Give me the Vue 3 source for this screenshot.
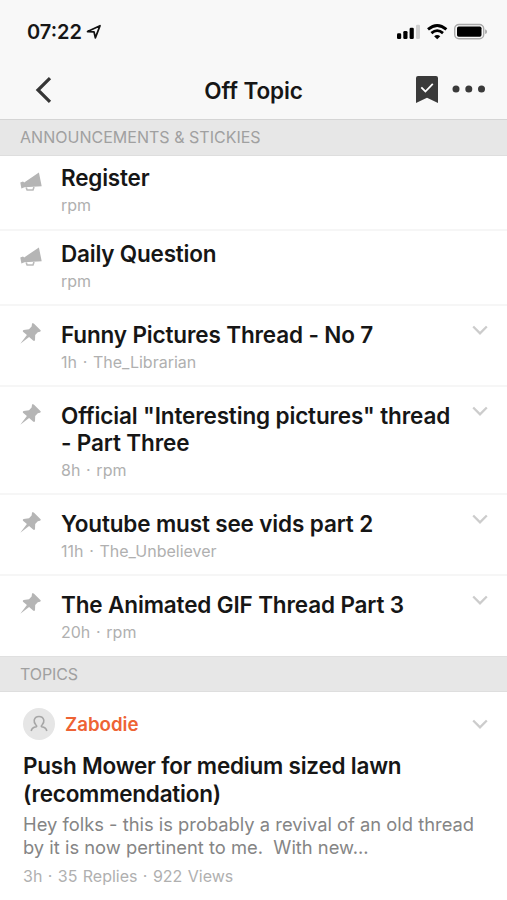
<script setup>
const threads = [
  { id: 1, kind: 'announcement', lines: ['Register'], meta: 'rpm' },
  { id: 2, kind: 'announcement', lines: ['Daily Question'], meta: 'rpm' },
  { id: 3, kind: 'pinned', lines: ['Funny Pictures Thread - No 7'], meta: '1h · The_Librarian' },
  { id: 4, kind: 'pinned', lines: ['Official "Interesting pictures" thread', '- Part Three'], meta: '8h · rpm' },
  { id: 5, kind: 'pinned', lines: ['Youtube must see vids part 2'], meta: '11h · The_Unbeliever' },
  { id: 6, kind: 'pinned', lines: ['The Animated GIF Thread Part 3'], meta: '20h · rpm' },
]
</script>

<template>
  <main class="screen">
    <header class="top">
      <div class="status">
        <span class="time">07:22</span>
        <svg class="location" width="16" height="16" viewBox="0 0 16 16"><path d="M1.6 7.5 14 1.8 9.4 13.8 8 7.9Z" fill="none" stroke="#111" stroke-width="1.8" stroke-linejoin="round" /></svg>
        <svg class="system" width="92" height="20" viewBox="0 0 92 20">
          <g fill="#000">
            <rect x="1" y="11.2" width="4.2" height="5.8" rx="1.3" />
            <rect x="7.3" y="9" width="4.2" height="8" rx="1.3" />
            <rect x="13.6" y="5.8" width="4.2" height="11.2" rx="1.3" />
            <rect x="20" y="2.7" width="4" height="14.3" rx="1.3" fill="#cfcfcf" />
            <path d="M38.1 14.2Q41.2 11.8 44.3 14.2L41.2 17.3Z" />
          </g>
          <path d="M32 7.4Q41.2-.5 50.4 7.4M35.4 11.1Q41.2 6.2 47 11.1" fill="none" stroke="#000" stroke-width="2.8" />
          <rect x="58.7" y="2.5" width="29" height="14.3" rx="4.3" fill="none" stroke="#a9a9a9" stroke-width="1.4" />
          <rect x="61" y="4.6" width="24.5" height="10.2" rx="1.7" fill="#000" />
          <path d="M89.2 7.3q1.8.7 1.8 2.4t-1.8 2.4Z" fill="#a0a0a0" />
        </svg>
      </div>
      <nav class="nav">
        <svg class="back" width="18" height="28" viewBox="0 0 18 28"><path d="M15 2.2 3 14 15 25.8" fill="none" stroke="#363636" stroke-width="3.2" /></svg>
        <h1>Off Topic</h1>
        <div class="actions">
          <svg width="22" height="27" viewBox="0 0 22 27">
            <path d="M0 2Q0 0 2 0H20Q22 0 22 2V27L11 21.8 0 27Z" fill="#3a3a3a" />
            <path d="M5.3 11.4 9.4 15.5 16.8 7.8" fill="none" stroke="#fff" stroke-width="1.8" />
          </svg>
          <svg class="more" width="34" height="8" viewBox="0 0 34 8" fill="#3a3a3a"><circle cx="4" cy="4" r="3.5" /><circle cx="16.8" cy="4" r="3.5" /><circle cx="29.5" cy="4" r="3.5" /></svg>
        </div>
      </nav>
    </header>

    <h2 class="section">ANNOUNCEMENTS &amp; STICKIES</h2>
    <article v-for="thread in threads" :key="thread.id" class="row" :class="thread.kind">
      <div class="icon">
        <svg v-if="thread.kind === 'announcement'" width="23" height="21" viewBox="0 0 23 21">
          <path d="M.3 10.6 3 9.6 4.2 10.4 18.9.4 21.7 14.2 4.5 15.3 1.4 16.6Z" fill="#b5b5b5" />
          <path d="M6.2 15.4 7.1 18H13L14 15" fill="none" stroke="#bbb" stroke-width="1.6" stroke-linejoin="round" />
        </svg>
        <svg v-else width="22" height="22" viewBox="0 0 22 22">
          <path d="M12.1.3Q13-.1 13.8.6L20.6 7.3Q21.1 8.3 20 8.7L17.8 9.2 15.2 11.9 15 17.2Q14.3 18.5 13.1 17.6L9.1 14.1.3 20.7 6.9 12.1 3 8.8Q2.4 7.6 3.6 7.1L9 6.3 11.6 3.5Z" fill="#b5b5b5" />
        </svg>
      </div>
      <div class="body">
        <h3 class="title"><span v-for="line in thread.lines" :key="line" class="line">{{ line }}</span></h3>
        <p class="meta">{{ thread.meta }}</p>
      </div>
      <svg v-if="thread.kind === 'pinned'" class="chevron" width="16" height="11" viewBox="0 0 16 11"><path d="M1.2 1.5 8 8.3 14.8 1.5" fill="none" stroke="#ccc" stroke-width="2.3" /></svg>
    </article>

    <h2 class="section topics">TOPICS</h2>
    <article class="post">
      <div class="author">
        <span class="avatar">
          <svg width="18" height="18" viewBox="0 0 18 18"><path d="M1.2 16Q1.8 12.5 6.3 11.8 7.2 11.3 6.1 10.2 3.7 7.6 4.2 5.2 5 1.5 9 1.5T13.8 5.2Q14.3 7.6 11.9 10.2 10.8 11.3 11.7 11.8 16.2 12.5 16.8 16" fill="none" stroke="#a6a6a6" stroke-width="1.6" /></svg>
        </span>
        <span class="name">Zabodie</span>
        <svg class="chevron" width="16" height="11" viewBox="0 0 16 11"><path d="M1.2 1.5 8 8.3 14.8 1.5" fill="none" stroke="#ccc" stroke-width="2.3" /></svg>
      </div>
      <h3 class="title headline"><span class="line">Push Mower for medium sized lawn</span><span class="line">(recommendation)</span></h3>
      <p class="excerpt"><span class="line">Hey folks - this is probably a revival of an old thread</span><span class="line">by it is now pertinent to me.&nbsp; With new...</span></p>
      <p class="meta stats">3h · 35 Replies · 922 Views</p>
    </article>
  </main>
</template>

<style>
body { margin: 0; background: #fff; }
</style>

<style scoped>
.screen { box-sizing: border-box; width: 507px; height: 900px; overflow: hidden; background: #fff; font-family: Inter, "Liberation Sans", sans-serif; color: #161616; }
h1, h2, h3, p { margin: 0; }
svg { display: block; flex: none; }
.top { height: 119px; background: #f8f8f8; }
.status { display: flex; height: 62px; padding: 0 19px 0 27px; align-items: center; }
.time { font-size: 20px; font-weight: 600; line-height: 24px; padding-top: 2px; }
.location { margin: 1px 0 0 4px; }
.system { margin: 2px 0 0 auto; }
.nav { display: grid; grid-template-columns: 1fr auto 1fr; height: 57px; align-items: center; padding: 0 35px 0 35px; }
.back { margin-top: -1px; }
h1 { font-size: 22.5px; font-weight: 600; line-height: 28px; white-space: nowrap; letter-spacing: -.1px; }
.actions { display: flex; justify-content: flex-end; align-items: center; gap: 14px; margin: -2px -14px 0 0; }
.more { margin-top: -1px; }
.section { box-sizing: border-box; height: 37px; padding: 0 20px; border-top: 1px solid #d5d5d5; border-bottom: 1px solid #dedede; background: #e7e7e7; color: #a0a0a0; font-size: 16px; font-weight: 400; line-height: 35px; letter-spacing: .02px; }
.row { display: flex; box-sizing: border-box; height: 81px; border-bottom: 2px solid #f6f6f6; padding: 14px 19px 0 20px; }
.row:has(.line + .line) { height: 108px; }
.row.announcement { height: 75px; padding-top: 8px; }
.row:has(+ .section) { border-bottom: 0; height: 80px; }
.icon { width: 41px; flex: none; padding-top: 8px; }
.pinned .icon { padding-top: 3px; }
.body { flex: 1; min-width: 0; }
.row + .row .body { padding-top: .6px; }
.line { display: block; white-space: nowrap; }
.title { font-size: 22.5px; line-height: 27.6px; font-weight: 600; letter-spacing: -.2px; }
.pinned .title { letter-spacing: -.14px; }
.meta { margin-top: 2.6px; font-size: 16px; line-height: 23px; color: #b0b0b0; white-space: nowrap; word-spacing: 1.2px; }
.chevron { margin-top: 5px; }
.topics { height: 36px; border-top-color: #e0e0e0; line-height: 34px; letter-spacing: -.1px; }
.post { padding: 16px 19px 0 23px; }
.author { display: flex; align-items: center; }
.avatar { display: grid; place-items: center; width: 32px; height: 32px; border-radius: 50%; background: #e6e6e6; }
.name { margin-left: 10px; padding-top: 1px; font-size: 18.7px; font-weight: 600; color: #ee6334; line-height: 24px; }
.author .chevron { margin: 1px 0 0 auto; }
.headline { margin-top: 12px; letter-spacing: -.22px; line-height: 27.5px; }
.excerpt { margin-top: 6px; font-size: 18.35px; line-height: 23px; color: #858585; }
.stats { margin-top: 6px; word-spacing: .9px; }
</style>
